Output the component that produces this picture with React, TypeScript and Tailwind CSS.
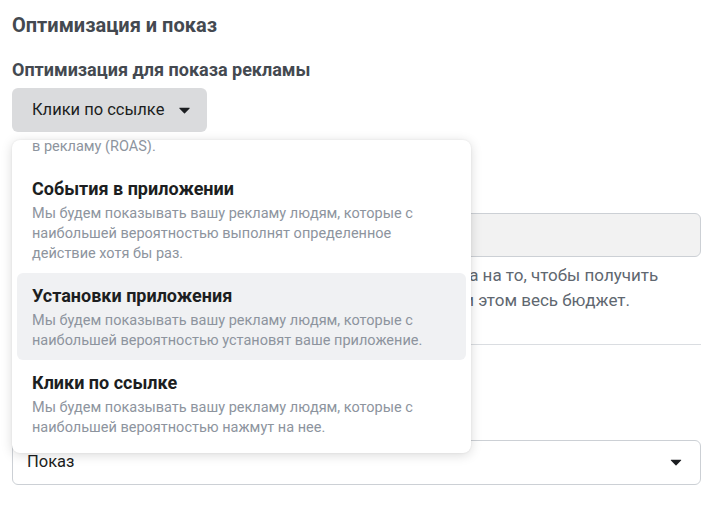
import React from "react";

const Caret = ({ className = "" }: { className?: string }) => (
  <svg viewBox="0 0 12 8" className={className} fill="currentColor">
    <path d="M0.6 0.8h10.8c0.5 0 0.8 0.6 0.4 1L6.5 7.1c-0.3 0.3-0.7 0.3-1 0L0.2 1.8c-0.4-0.4-0.1-1 0.4-1z" />
  </svg>
);

type Item = { title?: string; desc: string; active?: boolean };

const items: Item[] = [
  {
    title: "Ценность",
    desc: "Мы будем показывать вашу рекламу людям, которые с\nнаибольшей вероятностью принесут максимальную\nрентабельность инвестиций\nв рекламу (ROAS).",
  },
  {
    title: "События в приложении",
    desc: "Мы будем показывать вашу рекламу людям, которые с наибольшей вероятностью выполнят определенное действие хотя бы раз.",
  },
  {
    title: "Установки приложения",
    desc: "Мы будем показывать вашу рекламу людям, которые с наибольшей вероятностью установят ваше приложение.",
    active: true,
  },
  {
    title: "Клики по ссылке",
    desc: "Мы будем показывать вашу рекламу людям, которые с наибольшей вероятностью нажмут на нее.",
  },
];

export default function App() {
  return (
    <div
      className="relative w-[716px] h-[520px] overflow-hidden bg-white pl-3 pr-[15px] pt-[12px]"
      style={{ fontFamily: 'Roboto, "Liberation Sans", Arial, sans-serif' }}
    >
      <h2 className="text-[20px] leading-[26px] font-bold text-[#444950]">Оптимизация и показ</h2>
      <div className="mt-[21px] text-[18px] leading-[22px] font-bold text-[#444950]">
        Оптимизация для показа рекламы
      </div>
      <div className="relative mt-[7px]">
        <button className="flex h-[44px] w-[195px] items-center gap-[15px] rounded-[6px] bg-[#dadbdd] pl-5 text-[16.5px] text-[#1c1e21]">
          <span>Клики по ссылке</span>
          <Caret className="h-[7px] w-[11px] text-[#1c1e21]" />
        </button>

        {/* dropdown menu */}
        <div className="absolute left-0 top-[52px] z-10 h-[313px] w-[459px] overflow-hidden rounded-[8px] bg-white px-[5px] shadow-[0_2px_12px_rgba(0,0,0,0.15),0_0_2px_rgba(0,0,0,0.08)]">
          <div className="-mt-[101px]">
            {items.map((it, i) => (
              <div
                key={i}
                className={`rounded-[6px] px-[15px] pt-[12px] pb-[9px] ${it.active ? "bg-[#f0f1f3]" : ""}`}
              >
                <div className="text-[18px] leading-[22px] font-bold text-[#1c1e21]">{it.title}</div>
                <div className="mt-[4px] whitespace-pre-line text-[14.5px] leading-[20px] text-[#8d949e]">{it.desc}</div>
              </div>
            ))}
          </div>
        </div>
      </div>

      {/* background form content */}
      <div className="mt-[46px] text-[18px] leading-[22px] font-bold text-[#444950]">Стоимость за результат</div>
      <div className="mt-[13px] h-[44px] w-full rounded-[6px] border border-[#ccd0d5] bg-[#f2f2f2]" />
      <div className="mt-[6px] text-[17px] leading-[25px] text-[#606770]">
        <div className="whitespace-nowrap">
          <span className="tracking-[-0.15px]">Мы будем стремиться, обращая внимание не на затраты, </span>а на то, чтобы получить
        </div>
        <div className="whitespace-nowrap">
          <span className="tracking-[-0.18px]">максимальное количество результатов, израсходовав п</span>ри этом весь бюджет.
        </div>
      </div>
      <div className="mt-[31px] h-px w-full bg-[#dadde1]" />
      <div className="mt-[62px] text-[18px] leading-[22px] font-bold text-[#444950]">Когда с вас будет взиматься плата</div>
      <div className="mt-[11px] flex h-[45px] w-full items-center justify-between rounded-[6px] border border-[#ccd0d5] pl-[14px] pr-[18px] text-[16.5px] text-[#1c1e21]">
        <span>Показ</span>
        <Caret className="h-[7px] w-[12px] text-[#1c1e21]" />
      </div>
    </div>
  );
}
